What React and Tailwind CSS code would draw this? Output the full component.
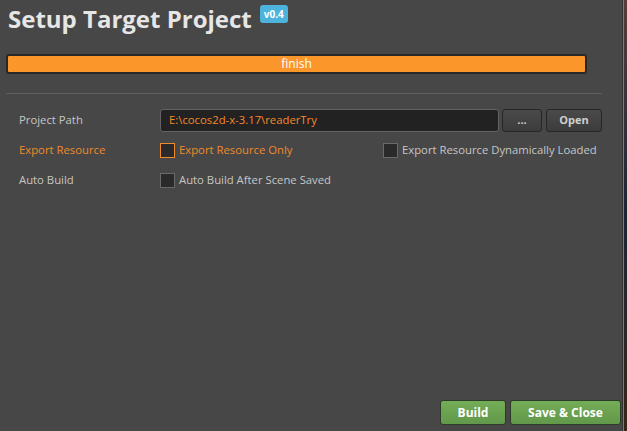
import React from 'react';

const Check = ({ active }) => (
  <span
    className={`inline-block w-[15px] h-[15px] shrink-0 bg-[#2a2a2a] border ${active ? 'border-[#f08a2c]' : 'border-[#6a6a6a]'}`}
  />
);

const DarkButton = ({ children, className = '' }) => (
  <button className={`h-[23px] rounded-[3px] border border-[#262626] bg-gradient-to-b from-[#4a4a4a] to-[#3c3c3c] text-[11px] font-bold text-[#d0d0d0] ${className}`}>
    {children}
  </button>
);

const GreenButton = ({ children, className = '' }) => (
  <button className={`h-[25px] rounded-[3px] border border-[#2e3a28] bg-gradient-to-b from-[#74ad58] to-[#62984a] text-[12px] font-bold text-white ${className}`}>
    {children}
  </button>
);

export default function App() {
  return (
    <div className="flex w-[627px] h-[431px] overflow-hidden font-['Open_Sans','Noto_Sans',sans-serif]">
      <div className="flex flex-col w-[622px] h-full bg-[#474747]">
        <div className="flex items-start pl-[8px] pt-[3px] h-[48px]">
          <h1 className="text-[24px] leading-[32px] font-bold text-[#e6e6e6]">Setup Target Project</h1>
          <span className="ml-[8px] mt-[2px] px-[4px] h-[18px] leading-[18px] rounded-[3px] bg-[#4cb4dc] text-[10px] font-bold text-white">v0.4</span>
        </div>

        <div className="mt-[6px] ml-[6px] w-[581px] h-[20px] rounded-[3px] border-2 border-[#282828] bg-[#fb962b] flex items-center justify-center">
          <span className="text-[12px] leading-none text-white">finish</span>
        </div>

        <div className="mt-[19px] ml-[6px] w-[596px] h-px bg-[#5e5e5e]" />

        <div className="flex flex-col pl-[19px] pt-[15px] text-[11.3px]">
          <div className="flex items-center h-[23px]">
            <span className="w-[141px] text-[#c6c6c6]">Project Path</span>
            <div className="flex items-center w-[339px] h-[23px] rounded-[3px] border border-[#636363] bg-[#222222] pl-[8px] text-[#f58a2a]">
              E:\cocos2d-x-3.17\readerTry
            </div>
            <DarkButton className="ml-[3px] w-[40px]">...</DarkButton>
            <DarkButton className="ml-[4px] w-[56px]">Open</DarkButton>
          </div>

          <div className="flex items-center h-[20px] mt-[8px]">
            <span className="w-[141px] text-[#f08a2c]">Export Resource</span>
            <Check active />
            <span className="ml-[4px] w-[204px] text-[#f08a2c]">Export Resource Only</span>
            <Check />
            <span className="ml-[4px] text-[#c6c6c6]">Export Resource Dynamically Loaded</span>
          </div>

          <div className="flex items-center h-[20px] mt-[10px]">
            <span className="w-[141px] text-[#c6c6c6]">Auto Build</span>
            <Check />
            <span className="ml-[4px] text-[#c6c6c6]">Auto Build After Scene Saved</span>
          </div>
        </div>

        <div className="mt-auto flex justify-end gap-[4px] pr-[1px] pb-[6px]">
          <GreenButton className="w-[66px]">Build</GreenButton>
          <GreenButton className="w-[111px]">Save &amp; Close</GreenButton>
        </div>
      </div>
      <div className="w-px h-full bg-[#333333]" />
      <div className="w-px h-full bg-[#3d8ad6]" />
      <div className="flex-1 h-full bg-gradient-to-b from-[#5a3a3a] via-[#1c2434] to-[#3a2418]" />
    </div>
  );
}
